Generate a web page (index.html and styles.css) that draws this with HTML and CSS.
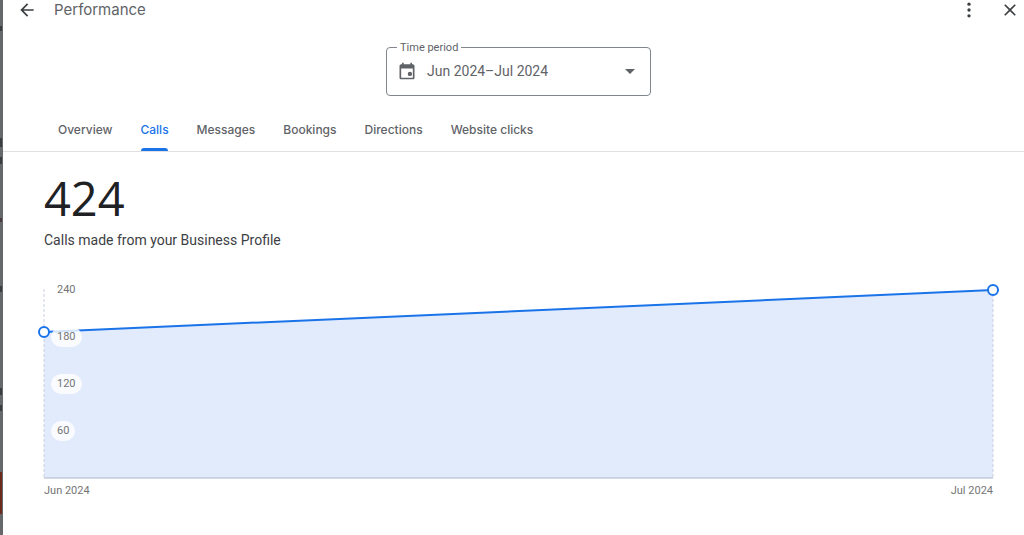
FILE: index.html
```html
<!DOCTYPE html>
<html lang="en">
<head>
    <meta charset="utf-8">
    <title>Performance</title>
    <link rel="stylesheet" href="styles.css">
</head>
<body>
    <div class="panel">
        <header class="top-bar">
            <button class="icon-button" aria-label="Back">
                <svg width="20" height="20" viewBox="0 0 24 24"><path d="M20 11H7.83l5.59-5.59L12 4l-8 8 8 8 1.41-1.41L7.83 13H20v-2z"/></svg>
            </button>
            <h1>Performance</h1>
            <button class="icon-button" aria-label="More options">
                <svg width="20" height="20" viewBox="0 0 24 24"><circle cx="12" cy="5" r="2"/><circle cx="12" cy="12" r="2"/><circle cx="12" cy="19" r="2"/></svg>
            </button>
            <button class="icon-button" aria-label="Close">
                <svg width="20" height="20" viewBox="0 0 24 24"><path d="M19 6.41L17.59 5 12 10.59 6.41 5 5 6.41 10.59 12 5 17.59 6.41 19 12 13.41 17.59 19 19 17.59 13.41 12z"/></svg>
            </button>
        </header>

        <div class="filters">
            <fieldset class="period">
                <legend><label for="period">Time period</label></legend>
                <svg class="calendar" width="20" height="20" viewBox="0 0 24 24"><path d="M19 4h-1V2h-2v2H8V2H6v2H5c-1.11 0-2 .9-2 2v14c0 1.1.89 2 2 2h14c1.1 0 2-.9 2-2V6c0-1.1-.9-2-2-2zm0 16H5V9h14v11z"/><circle cx="15.5" cy="15.5" r="2.6"/></svg>
                <select id="period">
                    <option>Jun 2024–Jul 2024</option>
                </select>
                <svg class="arrow" width="10" height="5" viewBox="0 0 10 5"><path d="M0 0h10L5 5z"/></svg>
            </fieldset>
        </div>

        <nav class="tabs">
            <a href="#overview">Overview</a>
            <a href="#calls" class="active">Calls</a>
            <a href="#messages">Messages</a>
            <a href="#bookings">Bookings</a>
            <a href="#directions">Directions</a>
            <a href="#website">Website clicks</a>
        </nav>

        <main class="content">
            <p class="total">424</p>
            <p class="caption">Calls made from your Business Profile</p>

            <div class="chart">
                <svg class="plot" width="100%" height="189">
                    <svg width="100%" height="189" viewBox="0 0 100 189" preserveAspectRatio="none">
                        <polygon class="area" points="0,43 100,1 100,189 0,189"/>
                        <polyline class="trend" points="0,43 100,1"/>
                    </svg>
                    <line class="guide" x1="0" y1="0" x2="0" y2="189"/>
                    <line class="guide" x1="100%" y1="0" x2="100%" y2="189"/>
                    <line class="axis" x1="0" y1="189" x2="100%" y2="189"/>
                </svg>
                <div class="scale">
                    <span>240</span>
                    <span>180</span>
                    <span>120</span>
                    <span>60</span>
                </div>
                <svg class="plot points" width="100%" height="189">
                    <circle cx="0" cy="43" r="5"/>
                    <circle cx="100%" cy="1" r="5"/>
                </svg>
            </div>
            <div class="months">
                <span>Jun 2024</span>
                <span>Jul 2024</span>
            </div>
        </main>
    </div>
</body>
</html>
```
FILE: styles.css
```css
* {
    box-sizing: border-box;
}

/* sliver of the dimmed page that the panel covers */
body {
    margin: 0;
    min-height: 100vh;
    padding-left: 3px;
    font-family: Roboto, sans-serif;
    color: #3c4043;
    background:
        linear-gradient(#3c3d40, #3c3d40) 0 26px / 2px 5px no-repeat,
        linear-gradient(#3c3d40, #3c3d40) 0 138px / 2px 9px no-repeat,
        linear-gradient(#3c3d40, #3c3d40) 0 157px / 2px 7px no-repeat,
        linear-gradient(#4a3c3e, #4a3c3e) 0 218px / 2px 4px no-repeat,
        linear-gradient(#3c3d40, #3c3d40) 0 286px / 2px 6px no-repeat,
        linear-gradient(#3c3d40, #3c3d40) 0 388px / 2px 7px no-repeat,
        linear-gradient(#3c3d40, #3c3d40) 0 405px / 2px 6px no-repeat,
        linear-gradient(#6b2a1a, #6b2a1a) 0 472px / 2px 42px no-repeat,
        #66676a;
}

.panel {
    min-height: 100vh;
    background: #fff;
}

.top-bar {
    display: flex;
    align-items: center;
    height: 19px;
    padding: 0 4px 0 14px;
}

.top-bar h1 {
    flex: 1;
    margin: 0 0 0 17px;
    font: 400 15px/20px Inter, sans-serif;
    color: #5f6368;
}

.icon-button {
    display: block;
    width: 20px;
    height: 20px;
    padding: 0;
    border: 0;
    background: none;
    fill: #3c4043;
}

.icon-button + .icon-button {
    margin-left: 21px;
}

.filters {
    display: flex;
    justify-content: center;
    padding: 20px 0 0 10px;
}

.period {
    display: flex;
    align-items: center;
    width: 265px;
    height: 57px;
    margin: 0;
    padding: 0 15px 8px 10px;
    border: 1px solid #80868b;
    border-radius: 4px;
}

.period legend {
    padding: 2px 3px 0;
    font-size: 11px;
    line-height: 14px;
    color: #5f6368;
}

.period select {
    flex: 1;
    margin-left: 10px;
    padding: 0;
    border: 0;
    appearance: none;
    background: none;
    font: 14px/20px Roboto, sans-serif;
    color: #5f6368;
}

.calendar,
.arrow {
    fill: #5f6368;
}

.tabs {
    display: flex;
    gap: 28px;
    margin-top: 13px;
    padding-left: 55px;
    border-bottom: 1px solid #e0e0e0;
}

.tabs a {
    position: relative;
    padding: 12px 0;
    font: 500 12px/18px Inter, sans-serif;
    color: #5f6368;
    text-decoration: none;
}

.tabs .active {
    color: #1a73e8;
}

.tabs .active::after {
    content: "";
    position: absolute;
    left: 1px;
    right: 1px;
    bottom: 0;
    height: 3px;
    border-radius: 3px 3px 0 0;
    background: #1a73e8;
}

.content {
    padding: 22px 31px 0 41px;
}

.total {
    margin: 0;
    font: 47px/48px "Open Sans", sans-serif;
    color: #202124;
}

.caption {
    margin: 8px 0 0;
    font-size: 14px;
    line-height: 20px;
}

.chart {
    position: relative;
    margin-top: 39px;
}

.plot {
    display: block;
    overflow: visible;
}

.area {
    fill: #e2ebfc;
}

.trend {
    fill: none;
    stroke: #1a73e8;
    stroke-width: 2;
    vector-effect: non-scaling-stroke;
}

.guide {
    stroke: #c9cfdb;
    stroke-dasharray: 3 2;
}

.axis {
    stroke: #aab4c8;
}

.points {
    position: absolute;
    inset: 0;
}

.points circle {
    fill: #fff;
    stroke: #1a73e8;
    stroke-width: 2;
}

/* axis labels sit over the shaded area, one every 47px */
.scale {
    display: flex;
    flex-direction: column;
    align-items: flex-start;
    gap: 27px;
    position: absolute;
    top: -9px;
    left: 7px;
}

.scale span {
    padding: 0 6px;
    border-radius: 10px;
    background: rgba(255, 255, 255, 0.8);
    font-size: 11px;
    line-height: 20px;
    color: #757575;
}

.months {
    display: flex;
    justify-content: space-between;
    margin-top: 5px;
    font-size: 11px;
    line-height: 16px;
    color: #757575;
}
```
